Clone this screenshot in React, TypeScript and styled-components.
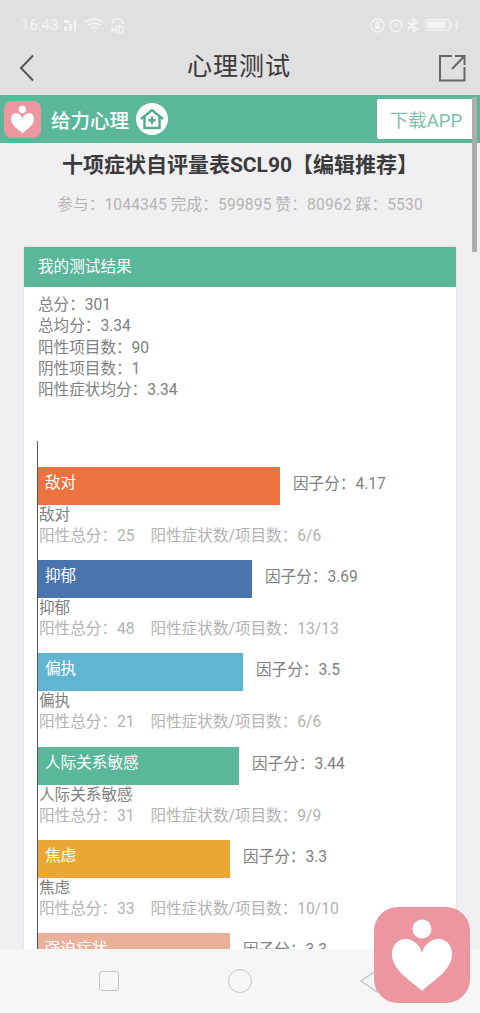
import * as React from 'react';
import styled, { createGlobalStyle } from 'styled-components';

const GlobalStyle = createGlobalStyle`
  html, body {
    margin: 0;
    padding: 0;
    background: #f0f0f3;
  }
  * { box-sizing: border-box; }
`;

const FONT = `"Roboto", "Noto Sans CJK SC", sans-serif`;

const Screen = styled.div`
  position: relative;
  width: 480px;
  height: 1013px;
  display: flex;
  flex-direction: column;
  overflow: hidden;
  font-family: ${FONT};
  background: #f0f0f3;
`;

const StatusBar = styled.div`
  height: 40px;
  flex: none;
  background: #e0e0e0;
  color: #f4f4f4;
  display: flex;
  align-items: center;
  justify-content: space-between;
  padding: 10px 19px 0 21px;
`;

const StatusGroup = styled.div`
  display: flex;
  align-items: center;
  gap: 4px;
`;

const StatusTime = styled.span`
  font-size: 15px;
  margin-right: 1px;
`;

const NavBar = styled.div`
  height: 55px;
  flex: none;
  background: #e0e0e0;
  display: flex;
  align-items: center;
  justify-content: space-between;
  padding: 0 14px 0 18px;
`;

const NavTitle = styled.div`
  font-size: 25px;
  line-height: 48px;
  margin: 0 0 2px 4px;
  color: #3a3a3a;
  letter-spacing: 1px;
`;

const Banner = styled.div`
  height: 48px;
  flex: none;
  background: #5ab79a;
  display: flex;
  align-items: center;
  padding: 0 5px 0 4px;
`;

const BrandName = styled.div`
  margin-left: 10px;
  color: #fff;
  font-size: 19.5px;
  font-weight: 500;
`;

const HomeBadge = styled.div`
  width: 32px;
  height: 32px;
  margin-left: 7px;
  border-radius: 50%;
  background: #fff;
  display: flex;
  align-items: center;
  justify-content: center;
`;

const DownloadButton = styled.div`
  margin-left: auto;
  width: 98px;
  height: 40px;
  background: #fff;
  border-radius: 2px;
  color: #7dbfa9;
  font-size: 18.5px;
  display: flex;
  align-items: center;
  justify-content: center;
`;

const Main = styled.div`
  flex: 1;
  min-height: 0;
  overflow: hidden;
  padding: 7px 24px 0;
`;

const Title = styled.h1`
  margin: 0;
  height: 30px;
  line-height: 30px;
  text-align: center;
  white-space: nowrap;
  font-size: 21px;
  font-weight: 700;
  color: #3b3b3b;
`;

const Meta = styled.div`
  margin-top: 13px;
  height: 24px;
  line-height: 24px;
  text-align: center;
  white-space: nowrap;
  font-size: 15.6px;
  letter-spacing: 0.15px;
  color: #b5b5b5;
`;

const Card = styled.section`
  margin-top: 30px;
  background: #fff;
  box-shadow: 0 0 2px rgba(0, 0, 0, 0.12);
`;

const CardHeader = styled.div`
  height: 40px;
  line-height: 40px;
  padding-left: 14px;
  background: #5ab79a;
  color: #fff;
  font-size: 15.6px;
`;

const CardBody = styled.div`
  padding: 8px 14px 0;
`;

const Summary = styled.div`
  height: 146px;
  font-size: 15.6px;
  line-height: 21.3px;
  color: #808080;
`;

const Chart = styled.div`
  margin-left: -1px;
  border-left: 1px solid #555;
  padding-top: 26px;
`;

const Factor = styled.div`
  height: 93.2px;
`;

const BarRow = styled.div`
  display: flex;
  align-items: center;
  height: 38px;
`;

const Bar = styled.div<{ $color: string; $width: number }>`
  width: ${p => p.$width}px;
  height: 38px;
  line-height: 33px;
  padding-left: 7px;
  background: ${p => p.$color};
  color: #fff;
  font-size: 15.6px;
  white-space: nowrap;
`;

const Score = styled.span`
  margin-left: 13px;
  font-size: 15.6px;
  color: #808080;
  white-space: nowrap;
  position: relative;
  top: -4px;
`;

const FactorName = styled.div`
  height: 21px;
  line-height: 21px;
  padding-left: 1px;
  font-size: 15.6px;
  color: #808080;
`;

const FactorStats = styled.div`
  height: 21px;
  line-height: 21px;
  padding-left: 1px;
  font-size: 15.6px;
  color: #b2b2b2;
  white-space: nowrap;
`;

const StatGap = styled.span`
  margin-left: 16px;
`;

const SystemNav = styled.div`
  height: 64px;
  flex: none;
  background: #f6f6f6;
  position: relative;
  z-index: 1;
  display: grid;
  grid-template-columns: 218px 34px 1fr;
  align-items: center;
`;

const NavSquare = styled.div`
  width: 20px;
  height: 20px;
  margin-left: 99px;
  border: 1.5px solid #c4c4c4;
  border-radius: 3px;
`;

const NavCircle = styled.div`
  width: 24px;
  height: 24px;
  margin-left: 10px;
  border: 1.5px solid #c4c4c4;
  border-radius: 50%;
`;

const NavBack = styled.svg`
  margin-left: 107px;
`;

const ScrollThumb = styled.div`
  position: absolute;
  right: 3px;
  top: 97px;
  width: 5px;
  height: 155px;
  background: #adadad;
  z-index: 2;
`;

const FloatingLogo = styled.div`
  position: absolute;
  left: 374px;
  top: 907px;
  width: 96px;
  height: 96px;
  z-index: 3;
`;

const COLON = '\uFF1A';

const factors = [
  { name: '敌对', color: '#ec723f', width: 242, score: '4.17', total: 25, ratio: '6/6' },
  { name: '抑郁', color: '#4a74ad', width: 214, score: '3.69', total: 48, ratio: '13/13' },
  { name: '偏执', color: '#5fb5d2', width: 205, score: '3.5', total: 21, ratio: '6/6' },
  { name: '人际关系敏感', color: '#5ab79a', width: 201, score: '3.44', total: 31, ratio: '9/9' },
  { name: '焦虑', color: '#eaa735', width: 192, score: '3.3', total: 33, ratio: '10/10' },
  { name: '强迫症状', color: '#eab09a', width: 192, score: '3.3', total: 33, ratio: '10/10' },
];

const summary = [
  `总分${COLON}301`,
  `总均分${COLON}3.34`,
  `阳性项目数${COLON}90`,
  `阴性项目数${COLON}1`,
  `阳性症状均分${COLON}3.34`,
];

function HeartLogo({ size, radius }: { size: number; radius: number }) {
  return (
    <svg width={size} height={size} viewBox="0 0 96 96">
      <rect width="96" height="96" rx={radius} fill="#ec979f" />
      <circle cx="48" cy="22" r="9.5" fill="#fff" />
      <path
        d="M48 84 C38 74 18 64 18 47 C18 36 26 31 33 32 C40 33 46 38 48 46 C50 38 56 33 63 32 C70 31 78 36 78 47 C78 64 58 74 48 84 Z"
        fill="#fff"
      />
    </svg>
  );
}

function StatusLeftIcons() {
  return (
    <StatusGroup>
      <svg width="17" height="14" viewBox="0 0 17 14" fill="#f4f4f4">
        <rect x="1" y="9" width="3" height="4" />
        <rect x="6" y="6" width="3" height="7" />
        <rect x="11" y="2" width="2" height="11" />
        <rect x="1" y="2" width="6" height="3" />
      </svg>
      <svg width="22" height="16" viewBox="0 0 22 16" fill="none" stroke="#f4f4f4" strokeWidth="1.6">
        <path d="M1 5.5 C6 1 14 1 19 5.5" />
        <path d="M4 8.5 C8 5.5 12 5.5 16 8.5" />
        <path d="M7 11.5 C9 10 11 10 13 11.5" />
        <circle cx="10" cy="14" r="1" fill="#f4f4f4" stroke="none" />
      </svg>
      <svg width="15" height="17" viewBox="0 0 15 17" fill="none" stroke="#f4f4f4" strokeWidth="1.5">
        <path d="M2 7 C2 0 13 0 13 7" />
        <path d="M2 9 V16 M2 12.5 H6 M6 9 V16 M9 9 V16 H11 C14 16 14 9 11 9 Z" />
      </svg>
    </StatusGroup>
  );
}

function StatusRightIcons() {
  return (
    <StatusGroup>
      <svg width="15" height="15" viewBox="0 0 15 15" fill="none" stroke="#f4f4f4" strokeWidth="1.4">
        <circle cx="7.5" cy="7.5" r="6.5" />
        <rect x="5" y="7" width="5" height="4" fill="#f4f4f4" stroke="none" />
        <path d="M5.7 7 V5.5 C5.7 3.4 9.3 3.4 9.3 5.5 V7" />
      </svg>
      <svg width="14" height="15" viewBox="0 0 14 15" fill="none" stroke="#f4f4f4" strokeWidth="1.4">
        <circle cx="7" cy="8" r="5.8" />
        <path d="M7 5 V8 H9.5 M1 3 L3 1 M13 3 L11 1" />
      </svg>
      <svg width="12" height="15" viewBox="0 0 12 15" fill="none" stroke="#f4f4f4" strokeWidth="1.6">
        <path d="M1 4 L10 11 L6 14 V1 L10 4 L1 11" />
      </svg>
      <svg width="36" height="14" viewBox="0 0 36 14" style={{ marginLeft: 2 }}>
        <rect x="0.7" y="1.7" width="24" height="10.6" rx="2.5" fill="none" stroke="#f4f4f4" strokeWidth="1.2" />
        <rect x="2.5" y="3.5" width="18" height="7" rx="1" fill="#f4f4f4" />
        <rect x="25.5" y="5" width="1.5" height="4" fill="#f4f4f4" />
        <path d="M33 2 L30.5 7.5 H32.5 L31 12.5" fill="none" stroke="#f4f4f4" strokeWidth="1.2" />
      </svg>
    </StatusGroup>
  );
}

export default function App() {
  return (
    <Screen>
      <GlobalStyle />
      <StatusBar>
        <StatusGroup>
          <StatusTime>16:43</StatusTime>
          <StatusLeftIcons />
        </StatusGroup>
        <StatusRightIcons />
      </StatusBar>
      <NavBar>
        <svg width="18" height="28" viewBox="0 0 18 28" fill="none" stroke="#555" strokeWidth="2">
          <path d="M15 1.5 L3 14 L15 26.5" />
        </svg>
        <NavTitle>心理测试</NavTitle>
        <svg width="28" height="28" viewBox="0 0 28 28" fill="none" stroke="#666" strokeWidth="2">
          <path d="M14 2 H2 V26.5 H26.5 V13" />
          <path d="M14 15 L26 2.5 M17 2 H26.5 V11" />
        </svg>
      </NavBar>
      <Banner>
        <HeartLogo size={37} radius={20} />
        <BrandName>给力心理</BrandName>
        <HomeBadge>
          <svg width="26" height="24" viewBox="0 0 26 24" fill="none" stroke="#4fae91" strokeWidth="2.4">
            <path d="M2 12 L13 3 L24 12" />
            <path d="M5.5 10 V21 H20.5 V10" />
            <path d="M13 9.5 V17 M9.5 13.2 H16.5" />
          </svg>
        </HomeBadge>
        <DownloadButton>下载APP</DownloadButton>
      </Banner>
      <Main>
        <Title>十项症状自评量表SCL90【编辑推荐】</Title>
        <Meta>
          参与{COLON}1044345 完成{COLON}599895 赞{COLON}80962 踩{COLON}5530
        </Meta>
        <Card>
          <CardHeader>我的测试结果</CardHeader>
          <CardBody>
            <Summary>
              {summary.map(line => (
                <div key={line}>{line}</div>
              ))}
            </Summary>
            <Chart>
              {factors.map(f => (
                <Factor key={f.name}>
                  <BarRow>
                    <Bar $color={f.color} $width={f.width}>{f.name}</Bar>
                    <Score>因子分{COLON}{f.score}</Score>
                  </BarRow>
                  <FactorName>{f.name}</FactorName>
                  <FactorStats>
                    阳性总分{COLON}{f.total}
                    <StatGap>阳性症状数/项目数{COLON}{f.ratio}</StatGap>
                  </FactorStats>
                </Factor>
              ))}
            </Chart>
          </CardBody>
        </Card>
      </Main>
      <SystemNav>
        <NavSquare />
        <NavCircle />
        <NavBack width="30" height="28" viewBox="0 0 30 28" fill="none" stroke="#c4c4c4" strokeWidth="1.5">
          <path d="M18 3 L2 14 L18 25 Z" strokeLinejoin="round" />
        </NavBack>
      </SystemNav>
      <ScrollThumb />
      <FloatingLogo>
        <HeartLogo size={96} radius={24} />
      </FloatingLogo>
    </Screen>
  );
}
